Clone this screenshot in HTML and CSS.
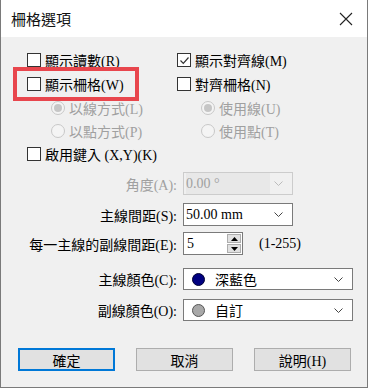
FILE: index.html
```
<!DOCTYPE html>
<html lang="zh-Hant">
<head>
	<meta charset="UTF-8">
	<title>柵格選項</title>
	<link rel="stylesheet" href="styles.css">
</head>
<body>
	<div class="dialog">
		<div class="titlebar">
			<span class="title">柵格選項</span>
			<svg class="close" width="14" height="14" viewBox="0 0 14 14">
				<path d="M1 1 L13 13 M13 1 L1 13" stroke="#222" stroke-width="1.1" fill="none"/>
			</svg>
		</div>
		<div class="content">
			<div class="opts">
				<div class="row r1">
					<label class="chk"><span class="box"></span>顯示讀數(R)</label>
					<label class="chk"><span class="box checked">
						<svg width="11" height="11" viewBox="0 0 11 11"><path d="M1.5 5.5 L4.3 8.3 L9.5 2.5" stroke="#333" stroke-width="1.2" fill="none"/></svg>
					</span>顯示對齊線(M)</label>
				</div>
				<div class="row r2">
					<label class="chk hl"><span class="box"></span>顯示柵格(W)<span class="mark"></span></label>
					<label class="chk"><span class="box"></span>對齊柵格(N)</label>
				</div>
				<div class="row r3 off">
					<label class="rad"><span class="dot on"></span>以線方式(L)</label>
					<label class="rad"><span class="dot on"></span>使用線(U)</label>
				</div>
				<div class="row r4 off">
					<label class="rad"><span class="dot"></span>以點方式(P)</label>
					<label class="rad"><span class="dot"></span>使用點(T)</label>
				</div>
				<div class="row r5">
					<label class="chk"><span class="box"></span>啟用鍵入 (X,Y)(K)</label>
				</div>
			</div>

			<div class="field f-angle off">
				<span class="lbl">角度(A):</span>
				<div class="combo small disabled">
					<span class="val">0.00 °</span>
					<svg class="chev" width="9" height="5" viewBox="0 0 9 5"><path d="M0.5 0.5 L4.5 4.5 L8.5 0.5" stroke="#bbb" fill="none"/></svg>
				</div>
			</div>
			<div class="field f-space">
				<span class="lbl">主線間距(S):</span>
				<div class="combo small">
					<span class="val">50.00 mm</span>
					<svg class="chev" width="9" height="5" viewBox="0 0 9 5"><path d="M0.5 0.5 L4.5 4.5 L8.5 0.5" stroke="#444" fill="none"/></svg>
				</div>
			</div>
			<div class="field f-spin">
				<span class="lbl">每一主線的副線間距(E):</span>
				<div class="spin">
					<span class="num">5</span>
					<div class="arrows">
						<span class="btn"><svg width="7" height="4" viewBox="0 0 7 4"><path d="M0 4 L3.5 0 L7 4 Z" fill="#000"/></svg></span>
						<span class="btn"><svg width="7" height="4" viewBox="0 0 7 4"><path d="M0 0 L3.5 4 L7 0 Z" fill="#000"/></svg></span>
					</div>
				</div>
				<span class="range">(1-255)</span>
			</div>
			<div class="field f-main">
				<span class="lbl">主線顏色(C):</span>
				<div class="combo wide">
					<span class="swatch navy"></span><span class="val">深藍色</span>
					<svg class="chev" width="9" height="5" viewBox="0 0 9 5"><path d="M0.5 0.5 L4.5 4.5 L8.5 0.5" stroke="#444" fill="none"/></svg>
				</div>
			</div>
			<div class="field f-minor">
				<span class="lbl">副線顏色(O):</span>
				<div class="combo wide">
					<span class="swatch grey"></span><span class="val">自訂</span>
					<svg class="chev" width="9" height="5" viewBox="0 0 9 5"><path d="M0.5 0.5 L4.5 4.5 L8.5 0.5" stroke="#444" fill="none"/></svg>
				</div>
			</div>

			<div class="buttons">
				<button class="default">確定</button>
				<button>取消</button>
				<button>說明(H)</button>
			</div>
		</div>
	</div>
</body>
</html>
```
FILE: styles.css
```
*{margin: 0;padding: 0;box-sizing: border-box;}
html,body{width: 100%;height: 100%;}
body{
	font-family: "Liberation Serif", "Noto Sans CJK TC", serif;
	font-size: 14px;
	color: #000;
	background: #fff;
}
.dialog{
	width: 368px;
	height: 388px;
	border: 1px solid #7a7a7a;
	border-top: none;
	display: flex;
	flex-direction: column;
}
.titlebar{
	height: 37px;
	background: #fff;
	display: flex;
	align-items: center;
	justify-content: space-between;
	padding: 0 14px 0 10px;
}
.title{
	font-family: "Noto Sans CJK TC", sans-serif;
	font-size: 15px;
	color: #111;
}
.content{
	flex: 1;
	background: #f0f0f0;
	padding-top: 11px;
}
.opts{padding-left: 26px;}
.row{
	display: grid;
	grid-template-columns: 150px 1fr;
	align-items: center;
	height: 24px;
}
.r4{height: 22px;}
.off{color: #a0a0a0;}
.chk,.rad{
	display: flex;
	align-items: center;
	white-space: nowrap;
}
.box{
	width: 14px;
	height: 14px;
	border: 1px solid #333;
	background: #fff;
	margin-right: 4px;
	display: flex;
	align-items: center;
	justify-content: center;
}
.hl{position: relative;}
.mark{
	position: absolute;
	left: -14px;
	top: 50%;
	margin-top: -17px;
	width: 126px;
	height: 34px;
	border: 4px solid #e8464d;
}
.rad{padding-left: 24px;}
.dot{
	width: 14px;
	height: 14px;
	border-radius: 50%;
	border: 1px solid #c8c8c8;
	background: #f4f4f4;
	margin-right: 4px;
	display: flex;
	align-items: center;
	justify-content: center;
}
.dot.on::after{
	content: "";
	width: 8px;
	height: 8px;
	border-radius: 50%;
	background: #c6c6c6;
}
.field{
	display: grid;
	grid-template-columns: 176px auto auto;
	column-gap: 6px;
	align-items: center;
	justify-content: start;
}
.lbl{text-align: right;white-space: nowrap;}
.f-angle{margin-top: 6px;}
.f-space{margin-top: 8px;}
.f-spin{margin-top: 6px;}
.f-main{margin-top: 13px;}
.f-minor{margin-top: 9px;}
.combo{
	height: 23px;
	border: 1px solid #7a7a7a;
	background: #fff;
	display: flex;
	align-items: center;
	padding-left: 2px;
	position: relative;
}
.combo.small{width: 110px;}
.combo.wide{width: 170px;height: 22px;}
.combo .chev{margin-left: auto;margin-right: 9px;}
.combo.disabled{
	border-color: #cccccc;
	background: #f0f0f0;
	color: #a0a0a0;
}
.combo.disabled .val{
	background: #e8e8e8;
	width: 84px;
	height: 100%;
	display: flex;
	align-items: center;
}
.swatch{
	width: 13px;
	height: 13px;
	border-radius: 50%;
	margin: 0 10px 0 6px;
	border: 1px solid #333;
}
.navy{background: #000080;border-color: #000033;}
.grey{background: #a8a8a8;border-color: #555;}
.spin{
	display: flex;
	height: 23px;
	width: 60px;
}
.num{
	width: 44px;
	border: 1px solid #7a7a7a;
	border-right: none;
	background: #fff;
	padding-left: 3px;
	display: flex;
	align-items: center;
}
.arrows{
	width: 16px;
	display: flex;
	flex-direction: column;
	background: #fff;
	border: 1px solid #7a7a7a;
	border-left: none;
	padding: 1px 1px 1px 0;
	gap: 1px;
}
.arrows .btn{
	flex: 1;
	background: #e1e1e1;
	border: 1px solid #adadad;
	display: flex;
	align-items: center;
	justify-content: center;
}
.range{margin-left: 10px;}
.buttons{
	display: flex;
	gap: 21px;
	padding-left: 17px;
	margin-top: 27px;
}
.buttons button{
	width: 97px;
	height: 23px;
	font-family: "Liberation Serif", "Noto Sans CJK TC", serif;
	font-size: 14px;
	background: #e1e1e1;
	border: 1px solid #adadad;
	color: #000;
}
.buttons button.default{border: 2px solid #0078d7;}
```
